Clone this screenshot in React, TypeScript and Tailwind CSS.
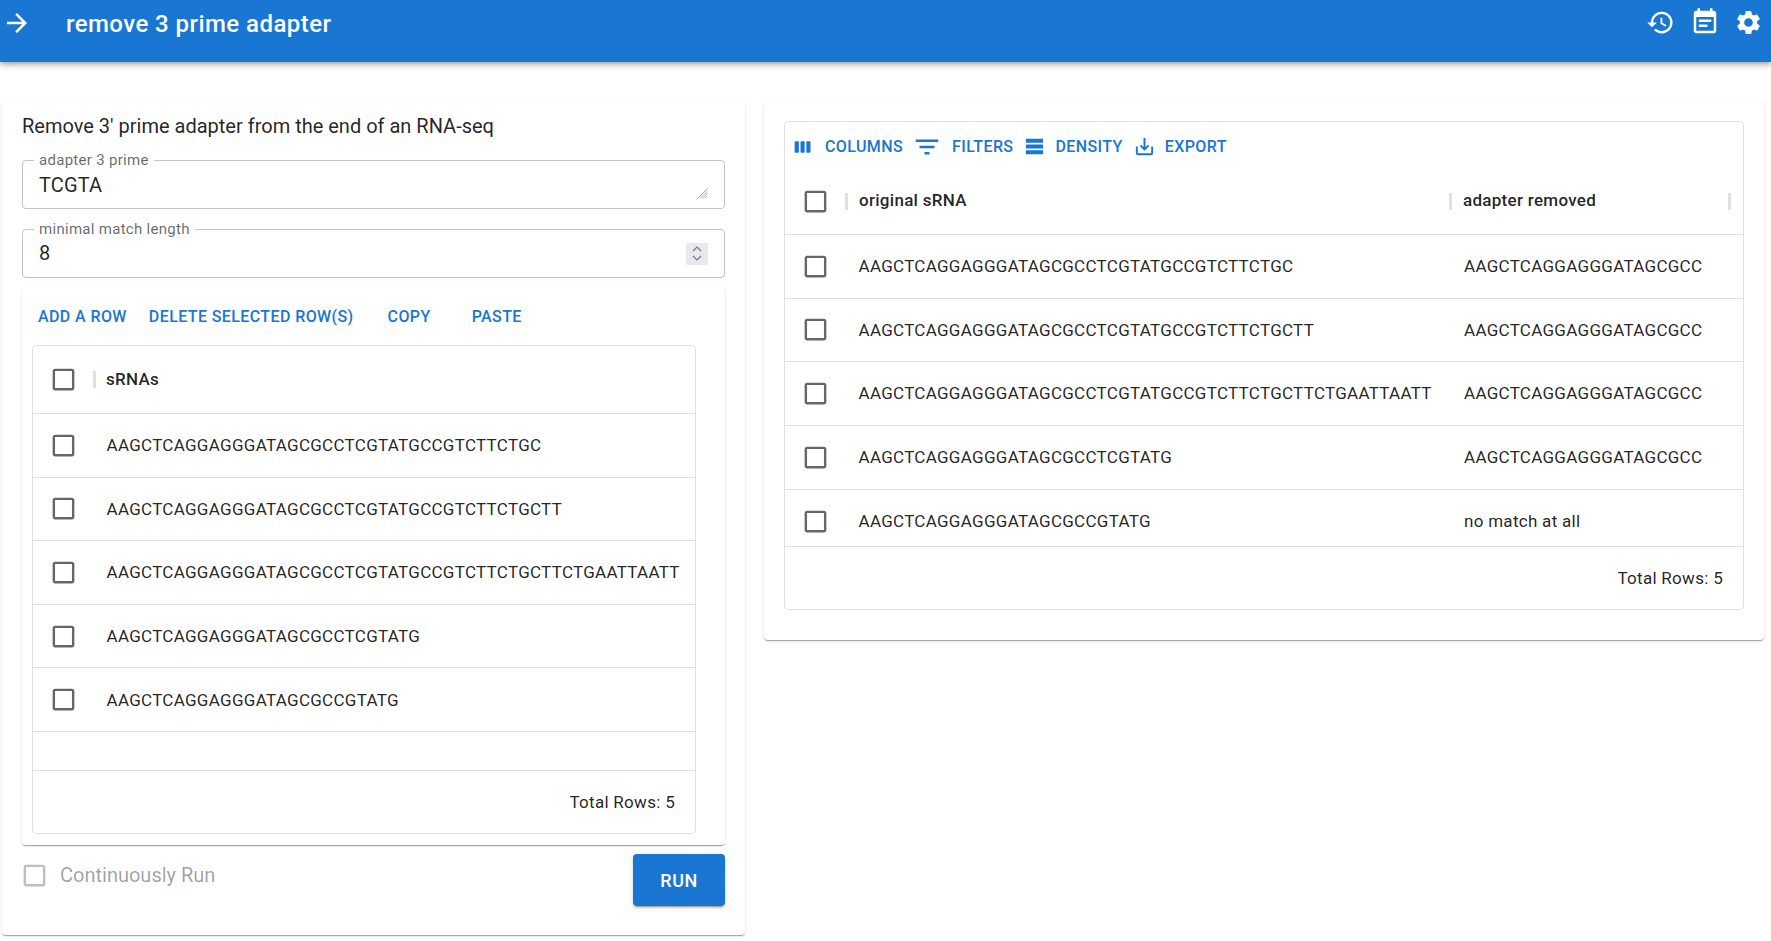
import React from "react";

const P = {
  arrow: "M12 4l-1.41 1.41L16.17 11H4v2h12.17l-5.58 5.59L12 20l8-8z",
  history: "M13 3c-4.97 0-9 4.03-9 9H1l3.89 3.89.07.14L9 12H6c0-3.87 3.13-7 7-7s7 3.13 7 7-3.13 7-7 7c-1.93 0-3.68-.79-4.94-2.06l-1.42 1.42C8.27 19.99 10.51 21 13 21c4.97 0 9-4.03 9-9s-4.03-9-9-9zm-1 5v5l4.28 2.54.72-1.21-3.5-2.08V8H12z",
  event: "M17 10H7v2h10v-2zm2-7h-1V1h-2v2H8V1H6v2H5c-1.11 0-1.99.9-1.99 2L3 19c0 1.1.89 2 2 2h14c1.1 0 2-.9 2-2V5c0-1.1-.9-2-2-2zm0 16H5V8h14v11zm-5-5H7v2h7v-2z",
  settings: "M19.14 12.94c.04-.3.06-.61.06-.94 0-.32-.02-.64-.07-.94l2.03-1.58c.18-.14.23-.41.12-.61l-1.92-3.32c-.12-.22-.37-.29-.59-.22l-2.39.96c-.5-.38-1.03-.7-1.62-.94l-.36-2.54c-.04-.24-.24-.41-.48-.41h-3.84c-.24 0-.43.17-.47.41l-.36 2.54c-.59.24-1.13.57-1.62.94l-2.39-.96c-.22-.08-.47 0-.59.22L2.74 8.87c-.12.21-.08.47.12.61l2.03 1.58c-.05.3-.09.63-.09.94s.02.64.07.94l-2.03 1.58c-.18.14-.23.41-.12.61l1.92 3.32c.12.22.37.29.59.22l2.39-.96c.5.38 1.03.7 1.62.94l.36 2.54c.05.24.24.41.48.41h3.84c.24 0 .44-.17.47-.41l.36-2.54c.59-.24 1.13-.56 1.62-.94l2.39.96c.22.08.47 0 .59-.22l1.92-3.32c.12-.22.07-.47-.12-.61l-2.01-1.58zM12 15.6c-1.98 0-3.6-1.62-3.6-3.6s1.62-3.6 3.6-3.6 3.6 1.62 3.6 3.6-1.62 3.6-3.6 3.6z",
  box: "M19 5v14H5V5h14m0-2H5c-1.1 0-2 .9-2 2v14c0 1.1.9 2 2 2h14c1.1 0 2-.9 2-2V5c0-1.1-.9-2-2-2z",
  columns: "M6 5H3c-.55 0-1 .45-1 1v12c0 .55.45 1 1 1h3c.55 0 1-.45 1-1V6c0-.55-.45-1-1-1zm14 0h-3c-.55 0-1 .45-1 1v12c0 .55.45 1 1 1h3c.55 0 1-.45 1-1V6c0-.55-.45-1-1-1zm-7 0h-3c-.55 0-1 .45-1 1v12c0 .55.45 1 1 1h3c.55 0 1-.45 1-1V6c0-.55-.45-1-1-1z",
  filter: "M10 18h4v-2h-4v2zM3 6v2h18V6H3zm3 7h12v-2H6v2z",
  density: "M21 8H3V4h18v4zM21 10H3v4h18v-4zM21 16H3v4h18v-4z",
  save: "M19 12v7H5v-7H3v7c0 1.1.9 2 2 2h14c1.1 0 2-.9 2-2v-7h-2zm-6 .67l2.59-2.58L17 11.5l-5 5-5-5 1.41-1.41L11 12.67V3h2z",
};

function Icon({ d, size, className }: { d: string; size: number; className?: string }) {
  return (
    <svg width={size} height={size} viewBox="0 0 24 24" fill="currentColor" className={"shrink-0 " + (className ?? "")}>
      <path d={d} />
    </svg>
  );
}

const Check = ({ off }: { off?: boolean }) => (
  <Icon d={P.box} size={29} className={off ? "text-black/25" : "text-black/60"} />
);

const Sep = () => <span className="w-[3px] h-[17px] bg-[#e0e0e0] shrink-0" />;

const left = [
  ["AAGCTCAGGAGGGATAGCGCCTCGTATGCCGTCTTCTGC", ""],
  ["AAGCTCAGGAGGGATAGCGCCTCGTATGCCGTCTTCTGCTT", "mt-[2px]"],
  ["AAGCTCAGGAGGGATAGCGCCTCGTATGCCGTCTTCTGCTTCTGAATTAATT", ""],
  ["AAGCTCAGGAGGGATAGCGCCTCGTATG", "mt-[2px]"],
  ["AAGCTCAGGAGGGATAGCGCCGTATG", "mt-[2px]"],
];
const right = [
  ["AAGCTCAGGAGGGATAGCGCC", "h-[64px]", "", ""],
  ["AAGCTCAGGAGGGATAGCGCC", "h-[63px]", "mt-[2px]", "-mt-[2px]"],
  ["AAGCTCAGGAGGGATAGCGCC", "h-[64px]", "", ""],
  ["AAGCTCAGGAGGGATAGCGCC", "h-[64px]", "", ""],
  ["no match at all", "h-[57px] items-start pt-[17px]", "mt-[2px]", ""],
];

const Field = ({ label, children }: { label: string; children: React.ReactNode }) => (
  <div className="relative h-[49px] rounded-[4px] border border-[#c4c4c4]">
    <span className="absolute left-[11px] -top-[10px] bg-white px-[5px] text-[15px] leading-[18px] text-black/60">
      {label}
    </span>
    {children}
  </div>
);

const TextBtn = ({ children, className }: { children: React.ReactNode; className?: string }) => (
  <span className={"text-[#1976d2] text-[16px] font-medium tracking-[0.4px] leading-none " + (className ?? "")}>{children}</span>
);

const cardShadow = "shadow-[0_2px_1px_-1px_rgba(0,0,0,0.2),0_1px_1px_0_rgba(0,0,0,0.14),0_1px_3px_0_rgba(0,0,0,0.12)]";

export default function App() {
  return (
    <div className="min-h-[941px] bg-white text-black/[.87] text-[17px] tracking-[0.29px] font-['Roboto',sans-serif]">
      <header className="h-[62px] bg-[#1976d2] text-white flex items-start shadow-[0_2px_4px_-1px_rgba(0,0,0,0.2),0_4px_5px_0_rgba(0,0,0,0.14),0_1px_10px_0_rgba(0,0,0,0.12)]">
        <Icon d={P.arrow} size={30} className="ml-[2px] mt-[8px]" />
        <h1 className="ml-[34px] mt-[8px] text-[24px] leading-[32px] font-medium tracking-[0.44px]">remove 3 prime adapter</h1>
        <div className="ml-auto flex mt-[8px]">
          <span className="w-[44.5px] flex justify-center"><Icon d={P.history} size={29} className="ml-[1px]" /></span>
          <span className="w-[44.5px] flex justify-center"><Icon d={P.event} size={30} className="ml-[1px] -mt-[1px]" /></span>
          <span className="w-[44.5px] flex justify-center"><Icon d={P.settings} size={29} /></span>
        </div>
      </header>

      <main className="flex items-start pt-[40px] pl-[2px] gap-[19px]">
        <section className={"w-[743px] rounded-[4px] px-[20px] pt-[12px] pb-[29px] bg-white " + cardShadow}>
          <h2 className="text-[20px] leading-[24px] tracking-[0px] h-[24px]">Remove 3' prime adapter from the end of an RNA-seq</h2>
          <div className="mt-[22px]">
            <Field label="adapter 3 prime">
              <textarea
                readOnly
                value="TCGTA"
                className="absolute left-[16px] right-[17px] top-[12px] h-[28px] resize-none text-[20px] leading-[24px] tracking-[0.15px] outline-none bg-transparent"
              />
              <svg width="11" height="11" viewBox="0 0 11 11" className="absolute right-[16px] top-[27px] text-[#8a8a8a]" stroke="currentColor" strokeWidth="0.7" fill="none">
                <path d="M10.5 0.5L0.5 10.5M10.5 3L3 10.5M10.5 5.5L5.5 10.5M10.5 8L8 10.5" />
              </svg>
            </Field>
          </div>
          <div className="mt-[20px]">
            <Field label="minimal match length">
              <div className="h-full pl-[16px] pr-[16px] pb-[2px] flex items-center justify-between">
                <span className="text-[20px] leading-[24px]">8</span>
                <span className="w-[22px] h-[22px] mt-[2px] bg-[#e8e8ed] flex flex-col items-center justify-center text-[#77778a]">
                  <svg width="10" height="6" viewBox="0 0 10 6" fill="none" stroke="currentColor" strokeWidth="1.2"><path d="M1 5l4-4 4 4" /></svg>
                  <svg width="10" height="6" viewBox="0 0 10 6" fill="none" stroke="currentColor" strokeWidth="1.2" className="mt-[3px]"><path d="M1 1l4 4 4-4" /></svg>
                </span>
              </div>
            </Field>
          </div>

          <div className={"mt-[10px] h-[557px] rounded-[4px] px-[10px] flex flex-col bg-white " + cardShadow}>
            <div className="h-[57px] flex items-center pl-[6px] shrink-0">
              <TextBtn>ADD A ROW</TextBtn>
              <TextBtn className="ml-[22px]">DELETE SELECTED ROW(S)</TextBtn>
              <TextBtn className="ml-[34px]">COPY</TextBtn>
              <TextBtn className="ml-[41px]">PASTE</TextBtn>
            </div>
            <div className="w-[664px] h-[489px] rounded-[4px] border border-[#e0e0e0] flex flex-col">
              <div className="h-[68px] flex items-center border-b border-[#e0e0e0] shrink-0">
                <div className="w-[60px] pl-[16px] flex shrink-0"><Check /></div>
                <Sep />
                <span className="ml-[10px] font-medium">sRNAs</span>
              </div>
              {left.map(([t, m], i) => (
                <div key={i} className="h-[63.6px] flex items-center border-b border-[#e0e0e0] shrink-0">
                  <div className="w-[73.5px] pl-[16px] flex shrink-0"><Check /></div>
                  <span className={m}>{t}</span>
                </div>
              ))}
              <div className="h-[39px] border-b border-[#e0e0e0] shrink-0" />
              <div className="flex-1 flex items-center justify-end pr-[20px] pt-[1px]">Total Rows: 5</div>
            </div>
          </div>

          <div className="mt-[9px] flex items-start justify-between">
            <div className="flex items-center mt-[7px] ml-[-2px]">
              <Check off />
              <span className="ml-[11px] -mt-[1px] text-[20px] leading-[24px] tracking-[0px] text-black/[.38]">Continuously Run</span>
            </div>
            <button className="w-[92px] h-[52px] pt-[1px] rounded-[4px] bg-[#1976d2] text-white text-[18px] font-medium tracking-[0.5px] shadow-[0_3px_1px_-2px_rgba(0,0,0,0.2),0_2px_2px_0_rgba(0,0,0,0.14),0_1px_5px_0_rgba(0,0,0,0.12)]">
              RUN
            </button>
          </div>
        </section>

        <section className={"w-[1000px] h-[538px] rounded-[4px] pl-[20px] pt-[19px] bg-white " + cardShadow}>
          <div className="w-[960px] h-[489px] rounded-[4px] border border-[#e0e0e0] flex flex-col">
            <div className="h-[46px] pt-[3px] flex items-center shrink-0">
              <Icon d={P.columns} size={20} className="ml-[8px] text-[#1976d2]" />
              <TextBtn className="ml-[12px]">COLUMNS</TextBtn>
              <Icon d={P.filter} size={30} className="ml-[9px] text-[#1976d2]" />
              <TextBtn className="ml-[10px]">FILTERS</TextBtn>
              <Icon d={P.density} size={23} className="ml-[10px] text-[#1976d2]" />
              <TextBtn className="ml-[9px]">DENSITY</TextBtn>
              <Icon d={P.save} size={23} className="ml-[10px] text-[#1976d2]" />
              <TextBtn className="ml-[9px]">EXPORT</TextBtn>
            </div>
            <div className="h-[67px] flex items-center border-b border-[#e0e0e0] shrink-0">
              <div className="w-[60px] pl-[16px] flex shrink-0"><Check /></div>
              <Sep />
              <span className="w-[601px] pl-[11px] font-medium shrink-0">original sRNA</span>
              <Sep />
              <span className="w-[276px] pl-[11px] font-medium shrink-0">adapter removed</span>
              <Sep />
            </div>
            {right.map(([r, h, m, c], i) => (
              <div key={i} className={"flex items-center border-b border-[#e0e0e0] shrink-0 " + h}>
                <div className={"w-[73.5px] pl-[16px] flex shrink-0 " + c}><Check /></div>
                <span className={"w-[605.5px] shrink-0 " + m}>{left[i][0]}</span>
                <span className={m}>{r}</span>
              </div>
            ))}
            <div className="flex-1 flex items-center justify-end pr-[20px] pt-[1px]">Total Rows: 5</div>
          </div>
        </section>
      </main>
    </div>
  );
}
